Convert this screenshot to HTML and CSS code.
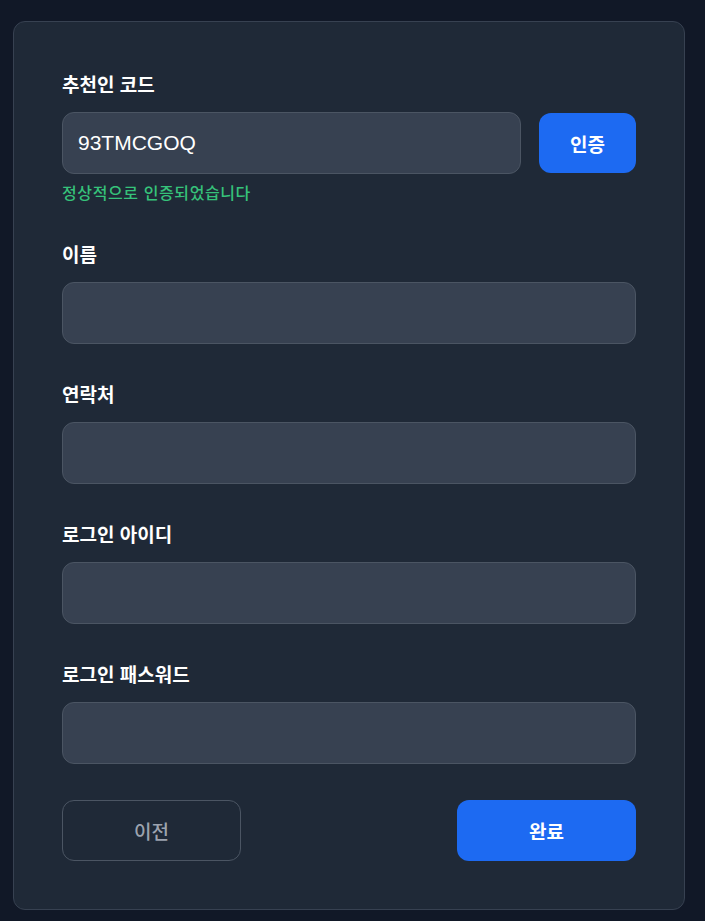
FILE: index.html
```html
<!DOCTYPE html>
<html lang="ko">
<head>
    <meta charset="UTF-8">
    <meta name="viewport" content="width=device-width, initial-scale=1.0">
    <title>회원가입</title>
    <link rel="stylesheet" href="styles.css">
</head>
<body>

<div class="card">
    <div class="field">
        <label class="label" for="refCode">추천인 코드</label>
        <div class="row">
            <input class="input" id="refCode" type="text" value="93TMCGOQ">
            <button class="btn btn-primary btn-verify">인증</button>
        </div>
        <p class="success">정상적으로 인증되었습니다</p>
    </div>

    <div class="field">
        <label class="label" for="name">이름</label>
        <input class="input" id="name" type="text">
    </div>

    <div class="field">
        <label class="label" for="phone">연락처</label>
        <input class="input" id="phone" type="text">
    </div>

    <div class="field">
        <label class="label" for="loginId">로그인 아이디</label>
        <input class="input" id="loginId" type="text">
    </div>

    <div class="field">
        <label class="label" for="loginPw">로그인 패스워드</label>
        <input class="input" id="loginPw" type="password">
    </div>

    <div class="actions">
        <button class="btn btn-outline">이전</button>
        <button class="btn btn-primary">완료</button>
    </div>
</div>

</body>
</html>
```

FILE: styles.css
```css
/* Общие стили */
body {
    font-family: 'Liberation Sans', 'Noto Sans CJK KR', sans-serif;
    background-color: #111827;
    color: #f9fafb;
    margin: 0;
    padding: 21px 0 0 13px;
}

/* Карточка */
.card {
    width: 574px;
    padding: 48px;
    background-color: #1f2937;
    border: 1px solid #374151;
    border-radius: 12px;
}

.field {
    margin-bottom: 36px;
}

.label {
    display: block;
    font-family: 'Noto Sans CJK KR', sans-serif;
    font-size: 19px;
    font-weight: 700;
    line-height: 28px;
    margin-bottom: 14px;
    color: #ffffff;
}

.row {
    display: flex;
    align-items: center;
    gap: 18px;
}

.input {
    box-sizing: border-box;
    width: 100%;
    height: 62px;
    padding: 0 15px;
    background-color: #374151;
    border: 1px solid #4b5563;
    border-radius: 12px;
    color: #ffffff;
    font-family: 'Liberation Sans', 'Noto Sans CJK KR', sans-serif;
    font-size: 21px;
    outline: none;
}

.success {
    margin: 7px 0 0;
    font-family: 'Noto Sans CJK KR', sans-serif;
    font-size: 16px;
    font-weight: 500;
    line-height: 23px;
    letter-spacing: 0.6px;
    color: #36c27a;
}

/* Кнопки */
.btn {
    box-sizing: border-box;
    height: 61px;
    border-radius: 12px;
    font-family: 'Noto Sans CJK KR', sans-serif;
    font-size: 19px;
    font-weight: 700;
    cursor: pointer;
}

.btn-primary {
    background-color: #1d6af2;
    border: none;
    color: #ffffff;
}

.btn-verify {
    flex-shrink: 0;
    width: 97px;
    height: 60px;
}

.btn-outline {
    background-color: transparent;
    border: 1px solid #4b5563;
    color: #9ca3af;
    font-weight: 500;
}

.actions {
    display: flex;
    justify-content: space-between;
}

.actions .btn {
    width: 179px;
}
```
